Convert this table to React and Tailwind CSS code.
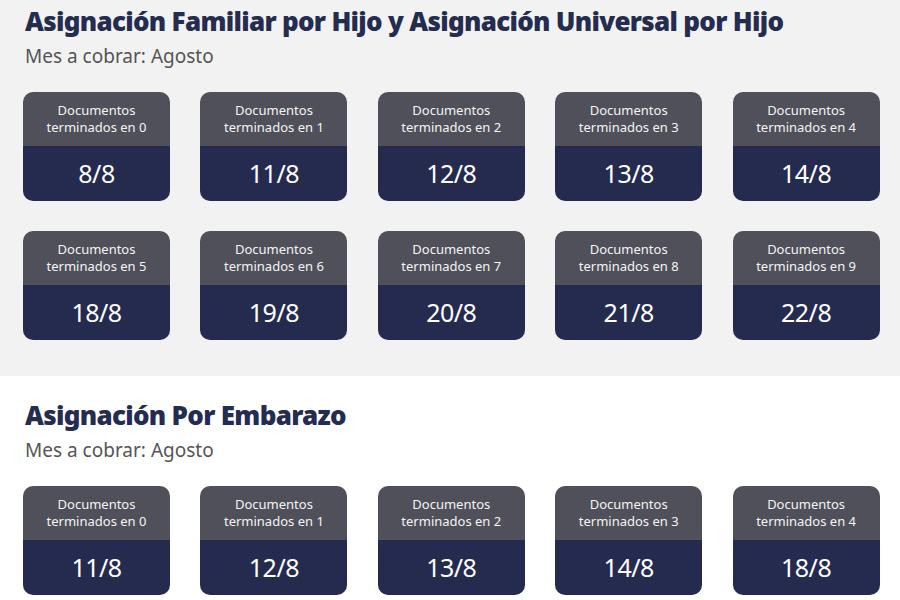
import React from "react";

const auh = ["8/8", "11/8", "12/8", "13/8", "14/8", "18/8", "19/8", "20/8", "21/8", "22/8"];
const embarazo = ["11/8", "12/8", "13/8", "14/8", "18/8"];

const Card = ({ digit, date }) => (
    <div className="w-[147px] h-[109px] rounded-[10px] overflow-hidden flex flex-col">
        <div className="h-[54px] bg-[#4f5059] text-[#f4f4f4] text-[13px] leading-[17px] flex flex-col items-center justify-center">
            <span>Documentos</span>
            <span>terminados en {digit}</span>
        </div>
        <div className="flex-1 bg-[#252b4f] text-white text-[25px] tracking-[-0.5px] flex items-center justify-center">
            {date}
        </div>
    </div>
);

const Grid = ({ dates }) => (
    <div className="grid grid-cols-5 gap-x-[30px] gap-y-[30px] w-[857px]">
        {dates.map((d, i) => (
            <Card key={i} digit={i} date={d} />
        ))}
    </div>
);

export default function App() {
    return (
        <div className="w-[900px] h-[600px] overflow-hidden bg-white" style={{ fontFamily: '"Noto Sans", "Open Sans", sans-serif' }}>
            <section className="bg-[#f2f2f2] pl-[23px] pt-[2px] h-[376px]">
                <h1 className="text-[26px] leading-[38px] font-black text-[#242c4f] tracking-[-0.7px] pl-[2px]">
                    Asignación Familiar por Hijo y Asignación Universal por Hijo
                </h1>
                <p className="text-[19px] leading-[32px] text-[#555] pl-[2px] mb-[20px]">Mes a cobrar: Agosto</p>
                <Grid dates={auh} />
            </section>
            <section className="pl-[23px] pt-[20px]">
                <h2 className="text-[26px] leading-[38px] font-black text-[#242c4f] tracking-[-0.7px] pl-[2px]">
                    Asignación Por Embarazo
                </h2>
                <p className="text-[19px] leading-[32px] text-[#555] pl-[2px] mb-[20px]">Mes a cobrar: Agosto</p>
                <Grid dates={embarazo} />
            </section>
        </div>
    );
}
